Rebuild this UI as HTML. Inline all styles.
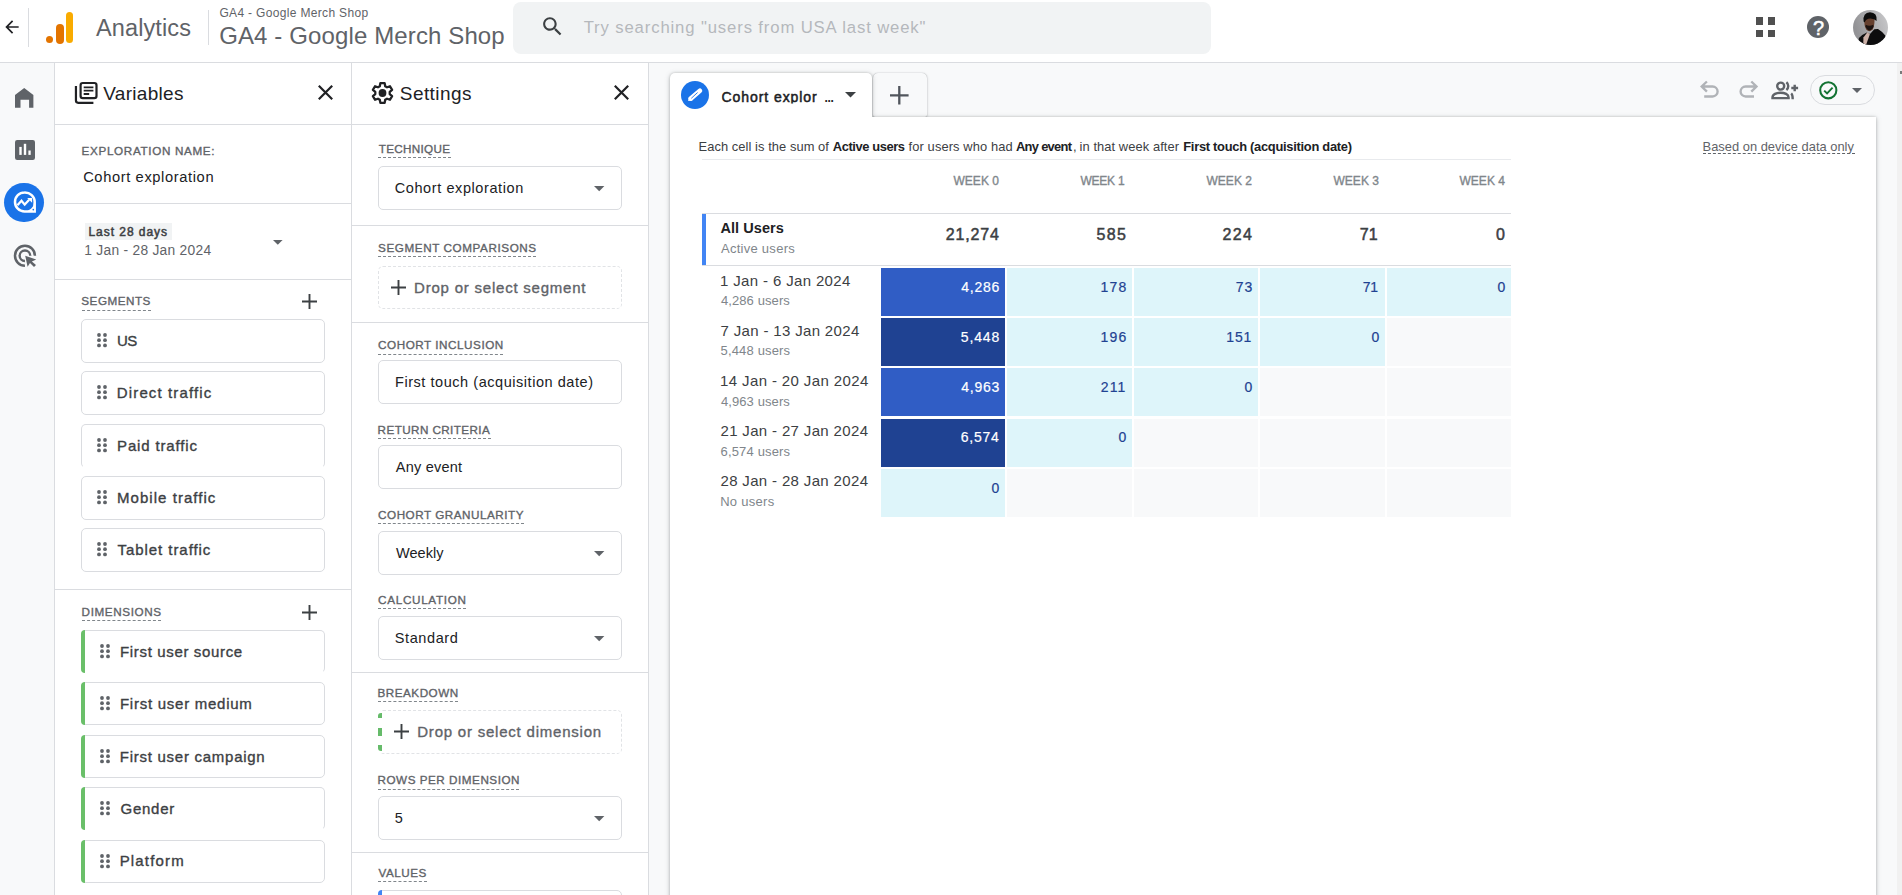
<!DOCTYPE html>
<html lang="en"><head><meta charset="utf-8"><title>Analytics | Cohort exploration</title>
<style>
html,body{margin:0;padding:0;}
body{width:1902px;height:895px;overflow:hidden;background:#fff;font-family:"Liberation Sans", sans-serif;position:relative;}
.a{position:absolute;box-sizing:border-box;}
.t{position:absolute;white-space:nowrap;line-height:20px;}
.t b{font-weight:bold;}
svg{position:absolute;overflow:visible;}
</style></head>
<body>
<div class="a" style="left:0px;top:0px;width:1902px;height:62px;background:#fff;"></div>
<div class="a" style="left:0px;top:62px;width:1902px;height:1px;background:#dadce0;"></div>
<div class="a" style="left:0px;top:63px;width:54px;height:832px;background:#f8f9fa;"></div>
<div class="a" style="left:54px;top:63px;width:1px;height:832px;background:#dadce0;"></div>
<div class="a" style="left:351px;top:63px;width:1px;height:832px;background:#dadce0;"></div>
<div class="a" style="left:648px;top:63px;width:1px;height:832px;background:#dadce0;"></div>
<div class="a" style="left:649px;top:63px;width:1248px;height:832px;background:#f8f9fa;"></div>
<div class="a" style="left:1897px;top:63px;width:5px;height:832px;background:#f1f1f1;"></div>
<div class="a" style="left:1900.4px;top:71px;width:1.6px;height:3px;background:#7a7a7a;"></div>
<svg style="left:1.5px;top:17.2px" width="20" height="20" viewBox="0 0 24 24"><path fill="#202124" d="M20 11H7.83l5.59-5.59L12 4l-8 8 8 8 1.41-1.41L7.83 13H20v-2z"/></svg>
<div class="a" style="left:28px;top:8px;width:1px;height:39px;background:#dadce0;"></div>
<div class="a" style="left:65.6px;top:11.6px;width:7.8px;height:31.9px;background:#f9ab00;border-radius:4px;"></div>
<div class="a" style="left:55.8px;top:24px;width:7.8px;height:19.5px;background:#e37400;border-radius:4px;"></div>
<div class="a" style="left:45.8px;top:35.8px;width:7.7px;height:7.7px;background:#e37400;border-radius:4px;"></div>
<div class="a" style="left:208px;top:10px;width:1px;height:35px;background:#dadce0;"></div>
<div class="a" style="left:513px;top:2px;width:698px;height:52px;background:#f1f3f4;border-radius:8px;"></div>
<svg style="left:540px;top:13.7px" width="25" height="25" viewBox="0 0 24 24"><path fill="#3c4043" d="M15.5 14h-.79l-.28-.27C15.41 12.59 16 11.11 16 9.5 16 5.91 13.09 3 9.5 3S3 5.91 3 9.5 5.91 16 9.5 16c1.61 0 3.09-.59 4.23-1.57l.27.28v.79l5 4.99L20.49 19l-4.99-5zm-6 0C7.01 14 5 11.99 5 9.5S7.01 5 9.5 5 14 7.01 14 9.5 11.99 14 9.5 14z"/></svg>
<div class="a" style="left:1756px;top:17.4px;width:7px;height:7.2px;background:#505050;"></div>
<div class="a" style="left:1768.2px;top:17.4px;width:7px;height:7.2px;background:#505050;"></div>
<div class="a" style="left:1756px;top:29.5px;width:7px;height:7.2px;background:#505050;"></div>
<div class="a" style="left:1768.2px;top:29.5px;width:7px;height:7.2px;background:#505050;"></div>
<div class="a" style="left:1807.3px;top:15.8px;width:22px;height:22px;background:#5f6368;border-radius:11px;"></div>
<svg style="left:1853px;top:10px" width="35" height="35" viewBox="0 0 35 35"><defs><clipPath id="av"><circle cx="17.5" cy="17.5" r="17.5"/></clipPath><linearGradient id="avg" x1="0" x2="1" y1="0.3" y2="0"><stop offset="0" stop-color="#939396"/><stop offset="1" stop-color="#cbcbcd"/></linearGradient></defs><g clip-path="url(#av)"><rect width="35" height="35" fill="url(#avg)"/><path d="M5 35 L5.9 28 Q9 24.5 13.9 22.5 L17 24 L21.3 19.3 L25 18.9 Q29.5 21.5 32.3 25.6 L33.5 35 Z" fill="#0d0d0e"/><path d="M10.4 27.5 L14.4 22.3 L16.9 24.2 L13.2 34.5 L10.3 33.5 Z" fill="#cdb1a8"/><path d="M11.4 7 Q10.8 16 13.2 19.6 Q16.3 22.8 19.6 19.6 Q22 15.5 21.4 7 Z" fill="#66402f"/><path d="M12.4 16.5 Q16.3 24.5 20.6 16.8 L20.2 14.8 Q16.3 16.8 12.8 14.8 Z" fill="#1c1311"/><path d="M10.6 11.5 Q9.6 2.6 17 2.3 Q24.6 2.6 23.6 11 Q21.5 8.5 17.3 8.5 Q13 8.5 11.6 12.5 Z" fill="#0c0c0c"/></g></svg>
<svg style="left:14.8px;top:88.2px" width="18.4" height="19.7" viewBox="0 0 18.4 19.7"><path fill="#5f6368" d="M9.2 0 L18.4 7 V19.7 H14.1 V11.7 H5.5 V19.7 H0 V7 Z"/></svg>
<svg style="left:14.8px;top:140px" width="20" height="20" viewBox="0 0 20 20"><rect width="20" height="20" rx="2.2" fill="#5f6368"/><rect x="4.3" y="6.9" width="2.4" height="8" fill="#fff"/><rect x="8.8" y="3.8" width="2.4" height="11.1" fill="#fff"/><rect x="13.4" y="10.5" width="2.3" height="4.4" fill="#fff"/></svg>
<div class="a" style="left:4.2px;top:182.6px;width:39.6px;height:39.6px;background:#1a73e8;border-radius:20px;"></div>
<svg style="left:12px;top:189.6px" width="24" height="24" viewBox="0 0 24 24" fill="none" stroke="#fff"><path d="M12.5 21.4 A9.5 9.5 0 0 0 22 11.9 L22.7 11.9 L22.7 21.4 Z" fill="#fff" stroke="none"/><path d="M12.5 2.4 A9.5 9.5 0 1 0 12.5 21.4 H22.7 V11.9 A9.9 9.5 0 0 0 12.5 2.4 Z" stroke-width="2.5"/><path d="M5.4 15.2 L9.5 10.7 L12.7 14.6 L17.2 9.8" stroke-width="2.2"/><path d="M15.2 7.9 H20.1 V12.8 Z" fill="#fff" stroke="none"/><circle cx="21.3" cy="19.6" r="0.85" fill="#1a73e8" stroke="none"/></svg>
<svg style="left:13px;top:243.5px" width="24" height="24" viewBox="0 0 24 24" fill="none" stroke="#5f6368"><path d="M11.95 21.7 A9.95 9.95 0 1 1 21.9 11.75" stroke-width="2.5"/><path d="M11.95 17.05 A5.3 5.3 0 1 1 17.25 11.75" stroke-width="2.4"/><path d="M12.2 11.7 L23.2 15.4 L18.9 17.4 L23 21.1 L21 23 L17 19 L14.6 22.7 Z" fill="#5f6368" stroke="none"/></svg>
<svg style="left:74.5px;top:82px" width="23" height="22" viewBox="0 0 23 22" fill="none" stroke="#202124"><rect x="5.6" y="1" width="15.9" height="15.1" rx="2.2" stroke-width="2.2"/><path d="M0.95 4.1 V18.6 A2.2 2.2 0 0 0 3.15 20.8 H18.4" stroke-width="2.2"/><path d="M8.7 5.3 H18.4 M8.7 8.7 H18.4 M8.7 12 H14.2" stroke-width="1.8"/></svg>
<svg style="left:317.5px;top:85.4px" width="15" height="15" viewBox="0 0 15 15"><path d="M0.8 0.8 L14.2 14.2 M14.2 0.8 L0.8 14.2" stroke="#202124" stroke-width="2.2" fill="none"/></svg>
<div class="a" style="left:55px;top:124px;width:296px;height:1px;background:#dadce0;"></div>
<div class="a" style="left:55px;top:203px;width:296px;height:1px;background:#dadce0;"></div>
<div class="a" style="left:85px;top:223px;width:87px;height:16.6px;background:#f1f3f4;"></div>
<svg style="left:273px;top:240.2px" width="9.6" height="4.8" viewBox="0 0 10 5"><path d="M0 0 H10 L5 5 Z" fill="#5f6368"/></svg>
<div class="a" style="left:55px;top:279px;width:296px;height:1px;background:#dadce0;"></div>
<div class="a" style="left:81.6px;top:309.5px;width:69.1px;height:0;border-top:1px dashed #80868b"></div>
<svg style="left:302.2px;top:294px" width="15" height="15" viewBox="0 0 15 15"><path d="M7.5 0 V15 M0 7.5 H15" stroke="#3c4043" stroke-width="1.9" fill="none"/></svg>
<div class="a" style="left:81px;top:319px;width:244.3px;height:44px;background:#fff;border:1px solid #dadce0;border-radius:5px;"></div>
<svg style="left:97px;top:333.3px" width="10" height="14.4" viewBox="0 0 10 14.4"><circle cx="2" cy="2" r="1.9" fill="#5f6368"/><circle cx="2" cy="7.2" r="1.9" fill="#5f6368"/><circle cx="2" cy="12.4" r="1.9" fill="#5f6368"/><circle cx="8" cy="2" r="1.9" fill="#5f6368"/><circle cx="8" cy="7.2" r="1.9" fill="#5f6368"/><circle cx="8" cy="12.4" r="1.9" fill="#5f6368"/></svg>
<div class="a" style="left:81px;top:371px;width:244.3px;height:44px;background:#fff;border:1px solid #dadce0;border-radius:5px;"></div>
<svg style="left:97px;top:385.3px" width="10" height="14.4" viewBox="0 0 10 14.4"><circle cx="2" cy="2" r="1.9" fill="#5f6368"/><circle cx="2" cy="7.2" r="1.9" fill="#5f6368"/><circle cx="2" cy="12.4" r="1.9" fill="#5f6368"/><circle cx="8" cy="2" r="1.9" fill="#5f6368"/><circle cx="8" cy="7.2" r="1.9" fill="#5f6368"/><circle cx="8" cy="12.4" r="1.9" fill="#5f6368"/></svg>
<div class="a" style="left:81px;top:424px;width:244.3px;height:43.5px;background:#fff;border:1px solid #dadce0;border-radius:5px;border-bottom-color:transparent;"></div>
<svg style="left:97px;top:438.3px" width="10" height="14.4" viewBox="0 0 10 14.4"><circle cx="2" cy="2" r="1.9" fill="#5f6368"/><circle cx="2" cy="7.2" r="1.9" fill="#5f6368"/><circle cx="2" cy="12.4" r="1.9" fill="#5f6368"/><circle cx="8" cy="2" r="1.9" fill="#5f6368"/><circle cx="8" cy="7.2" r="1.9" fill="#5f6368"/><circle cx="8" cy="12.4" r="1.9" fill="#5f6368"/></svg>
<div class="a" style="left:81px;top:476px;width:244.3px;height:43.5px;background:#fff;border:1px solid #dadce0;border-radius:5px;"></div>
<svg style="left:97px;top:490.3px" width="10" height="14.4" viewBox="0 0 10 14.4"><circle cx="2" cy="2" r="1.9" fill="#5f6368"/><circle cx="2" cy="7.2" r="1.9" fill="#5f6368"/><circle cx="2" cy="12.4" r="1.9" fill="#5f6368"/><circle cx="8" cy="2" r="1.9" fill="#5f6368"/><circle cx="8" cy="7.2" r="1.9" fill="#5f6368"/><circle cx="8" cy="12.4" r="1.9" fill="#5f6368"/></svg>
<div class="a" style="left:81px;top:528px;width:244.3px;height:43.5px;background:#fff;border:1px solid #dadce0;border-radius:5px;"></div>
<svg style="left:97px;top:542.3px" width="10" height="14.4" viewBox="0 0 10 14.4"><circle cx="2" cy="2" r="1.9" fill="#5f6368"/><circle cx="2" cy="7.2" r="1.9" fill="#5f6368"/><circle cx="2" cy="12.4" r="1.9" fill="#5f6368"/><circle cx="8" cy="2" r="1.9" fill="#5f6368"/><circle cx="8" cy="7.2" r="1.9" fill="#5f6368"/><circle cx="8" cy="12.4" r="1.9" fill="#5f6368"/></svg>
<div class="a" style="left:55px;top:589px;width:296px;height:1px;background:#dadce0;"></div>
<div class="a" style="left:81.6px;top:619.5px;width:79.9px;height:0;border-top:1px dashed #80868b"></div>
<svg style="left:302.2px;top:605px" width="15" height="15" viewBox="0 0 15 15"><path d="M7.5 0 V15 M0 7.5 H15" stroke="#3c4043" stroke-width="1.9" fill="none"/></svg>
<div class="a" style="left:81px;top:630px;width:244.3px;height:43px;background:#fff;border:1px solid #dadce0;border-radius:5px;border-bottom-color:transparent;"></div>
<div class="a" style="left:81px;top:630px;width:4px;height:43px;background:#6abf69;border-radius:5px 0 0 5px;"></div>
<svg style="left:100.2px;top:644px" width="10" height="14.4" viewBox="0 0 10 14.4"><circle cx="2" cy="2" r="1.9" fill="#5f6368"/><circle cx="2" cy="7.2" r="1.9" fill="#5f6368"/><circle cx="2" cy="12.4" r="1.9" fill="#5f6368"/><circle cx="8" cy="2" r="1.9" fill="#5f6368"/><circle cx="8" cy="7.2" r="1.9" fill="#5f6368"/><circle cx="8" cy="12.4" r="1.9" fill="#5f6368"/></svg>
<div class="a" style="left:81px;top:682px;width:244.3px;height:43px;background:#fff;border:1px solid #dadce0;border-radius:5px;"></div>
<div class="a" style="left:81px;top:682px;width:4px;height:43px;background:#6abf69;border-radius:5px 0 0 5px;"></div>
<svg style="left:100.2px;top:696px" width="10" height="14.4" viewBox="0 0 10 14.4"><circle cx="2" cy="2" r="1.9" fill="#5f6368"/><circle cx="2" cy="7.2" r="1.9" fill="#5f6368"/><circle cx="2" cy="12.4" r="1.9" fill="#5f6368"/><circle cx="8" cy="2" r="1.9" fill="#5f6368"/><circle cx="8" cy="7.2" r="1.9" fill="#5f6368"/><circle cx="8" cy="12.4" r="1.9" fill="#5f6368"/></svg>
<div class="a" style="left:81px;top:734.5px;width:244.3px;height:43px;background:#fff;border:1px solid #dadce0;border-radius:5px;"></div>
<div class="a" style="left:81px;top:734.5px;width:4px;height:43px;background:#6abf69;border-radius:5px 0 0 5px;"></div>
<svg style="left:100.2px;top:748.5px" width="10" height="14.4" viewBox="0 0 10 14.4"><circle cx="2" cy="2" r="1.9" fill="#5f6368"/><circle cx="2" cy="7.2" r="1.9" fill="#5f6368"/><circle cx="2" cy="12.4" r="1.9" fill="#5f6368"/><circle cx="8" cy="2" r="1.9" fill="#5f6368"/><circle cx="8" cy="7.2" r="1.9" fill="#5f6368"/><circle cx="8" cy="12.4" r="1.9" fill="#5f6368"/></svg>
<div class="a" style="left:81px;top:787px;width:244.3px;height:43px;background:#fff;border:1px solid #dadce0;border-radius:5px;border-bottom-color:transparent;"></div>
<div class="a" style="left:81px;top:787px;width:4px;height:43px;background:#6abf69;border-radius:5px 0 0 5px;"></div>
<svg style="left:100.2px;top:801px" width="10" height="14.4" viewBox="0 0 10 14.4"><circle cx="2" cy="2" r="1.9" fill="#5f6368"/><circle cx="2" cy="7.2" r="1.9" fill="#5f6368"/><circle cx="2" cy="12.4" r="1.9" fill="#5f6368"/><circle cx="8" cy="2" r="1.9" fill="#5f6368"/><circle cx="8" cy="7.2" r="1.9" fill="#5f6368"/><circle cx="8" cy="12.4" r="1.9" fill="#5f6368"/></svg>
<div class="a" style="left:81px;top:839.5px;width:244.3px;height:43px;background:#fff;border:1px solid #dadce0;border-radius:5px;"></div>
<div class="a" style="left:81px;top:839.5px;width:4px;height:43px;background:#6abf69;border-radius:5px 0 0 5px;"></div>
<svg style="left:100.2px;top:853.5px" width="10" height="14.4" viewBox="0 0 10 14.4"><circle cx="2" cy="2" r="1.9" fill="#5f6368"/><circle cx="2" cy="7.2" r="1.9" fill="#5f6368"/><circle cx="2" cy="12.4" r="1.9" fill="#5f6368"/><circle cx="8" cy="2" r="1.9" fill="#5f6368"/><circle cx="8" cy="7.2" r="1.9" fill="#5f6368"/><circle cx="8" cy="12.4" r="1.9" fill="#5f6368"/></svg>
<svg style="left:371px;top:82px" width="23" height="22" viewBox="0 0 23 22"><path d="M8.80 4.22 L9.35 1.15 L13.65 1.15 L14.20 4.22 L16.02 5.27 L18.96 4.21 L21.11 7.94 L18.72 9.95 L18.72 12.05 L21.11 14.06 L18.96 17.79 L16.02 16.73 L14.20 17.78 L13.65 20.85 L9.35 20.85 L8.80 17.78 L6.98 16.73 L4.04 17.79 L1.89 14.06 L4.28 12.05 L4.28 9.95 L1.89 7.94 L4.04 4.21 L6.98 5.27 Z" fill="none" stroke="#202124" stroke-width="2.3" stroke-linejoin="round"/><circle cx="11.5" cy="11" r="3.9" fill="#202124"/></svg>
<svg style="left:614.3px;top:85.4px" width="15" height="15" viewBox="0 0 15 15"><path d="M0.8 0.8 L14.2 14.2 M14.2 0.8 L0.8 14.2" stroke="#202124" stroke-width="2.2" fill="none"/></svg>
<div class="a" style="left:352px;top:124px;width:296px;height:1px;background:#dadce0;"></div>
<div class="a" style="left:378.1px;top:156.5px;width:72.9px;height:0;border-top:1px dashed #80868b"></div>
<div class="a" style="left:378px;top:166px;width:244px;height:43.5px;background:#fff;border:1px solid #dadce0;border-radius:5px;"></div>
<svg style="left:593.9px;top:185.7px" width="10.4" height="5.2" viewBox="0 0 10 5"><path d="M0 0 H10 L5 5 Z" fill="#5f6368"/></svg>
<div class="a" style="left:352px;top:225px;width:296px;height:1px;background:#dadce0;"></div>
<div class="a" style="left:378.1px;top:255.5px;width:158.1px;height:0;border-top:1px dashed #80868b"></div>
<div class="a" style="left:378px;top:266px;width:244px;height:42.5px;border:1px dashed #e1e3e6;border-radius:5px;"></div>
<svg style="left:391.3px;top:280px" width="15" height="15" viewBox="0 0 15 15"><path d="M7.5 0 V15 M0 7.5 H15" stroke="#3c4043" stroke-width="1.9" fill="none"/></svg>
<div class="a" style="left:352px;top:322px;width:296px;height:1px;background:#dadce0;"></div>
<div class="a" style="left:378.1px;top:353.5px;width:125.2px;height:0;border-top:1px dashed #80868b"></div>
<div class="a" style="left:378px;top:360px;width:244px;height:43.5px;background:#fff;border:1px solid #dadce0;border-radius:5px;"></div>
<div class="a" style="left:378.1px;top:437.5px;width:112.5px;height:0;border-top:1px dashed #80868b"></div>
<div class="a" style="left:378px;top:445px;width:244px;height:43.5px;background:#fff;border:1px solid #dadce0;border-radius:5px;"></div>
<div class="a" style="left:378.1px;top:522.5px;width:146.0px;height:0;border-top:1px dashed #80868b"></div>
<div class="a" style="left:378px;top:531px;width:244px;height:43.5px;background:#fff;border:1px solid #dadce0;border-radius:5px;"></div>
<svg style="left:593.9px;top:550.7px" width="10.4" height="5.2" viewBox="0 0 10 5"><path d="M0 0 H10 L5 5 Z" fill="#5f6368"/></svg>
<div class="a" style="left:378.1px;top:607.5px;width:88.0px;height:0;border-top:1px dashed #80868b"></div>
<div class="a" style="left:378px;top:616px;width:244px;height:43.5px;background:#fff;border:1px solid #dadce0;border-radius:5px;"></div>
<svg style="left:593.9px;top:635.7px" width="10.4" height="5.2" viewBox="0 0 10 5"><path d="M0 0 H10 L5 5 Z" fill="#5f6368"/></svg>
<div class="a" style="left:352px;top:672px;width:296px;height:1px;background:#dadce0;"></div>
<div class="a" style="left:378.1px;top:700.5px;width:80.0px;height:0;border-top:1px dashed #80868b"></div>
<div class="a" style="left:378px;top:710px;width:244px;height:43.7px;border:1px dashed #e1e3e6;border-radius:5px;"></div>
<div class="a" style="left:377px;top:711px;width:4px;height:42px;background:#fff;"></div>
<div class="a" style="left:378px;top:712.6px;width:4px;height:5.199999999999932px;background:#66bb6a;border-radius:3px 0 0 0;"></div>
<div class="a" style="left:378px;top:727.7px;width:4px;height:7.899999999999977px;background:#66bb6a;"></div>
<div class="a" style="left:378px;top:745.3px;width:4px;height:6.100000000000023px;background:#66bb6a;border-radius:0 0 0 3px;"></div>
<svg style="left:394.3px;top:724.2px" width="15" height="15" viewBox="0 0 15 15"><path d="M7.5 0 V15 M0 7.5 H15" stroke="#3c4043" stroke-width="1.9" fill="none"/></svg>
<div class="a" style="left:378.1px;top:788.5px;width:141.3px;height:0;border-top:1px dashed #80868b"></div>
<div class="a" style="left:378px;top:796px;width:244px;height:43.5px;background:#fff;border:1px solid #dadce0;border-radius:5px;"></div>
<svg style="left:593.9px;top:815.7px" width="10.4" height="5.2" viewBox="0 0 10 5"><path d="M0 0 H10 L5 5 Z" fill="#5f6368"/></svg>
<div class="a" style="left:352px;top:852px;width:296px;height:1px;background:#dadce0;"></div>
<div class="a" style="left:378.1px;top:880.5px;width:48.5px;height:0;border-top:1px dashed #80868b"></div>
<div class="a" style="left:378px;top:890px;width:244px;height:43.5px;background:#fff;border:1px solid #dadce0;border-radius:5px;overflow:hidden;"></div>
<div class="a" style="left:378px;top:890px;width:4px;height:20px;background:#4285f4;border-radius:5px 0 0 0;"></div>
<div class="a" style="left:872.5px;top:72.7px;width:54.8px;height:44px;background:#f8f9fa;border-radius:5px 5px 2px 2px;box-shadow:0 0 1px rgba(60,64,67,.45),0 1px 3px rgba(60,64,67,.25);"></div>
<svg style="left:890.3px;top:85.8px" width="18.6" height="18.6" viewBox="0 0 15 15"><path d="M7.5 0 V15 M0 7.5 H15" stroke="#50555c" stroke-width="1.85" fill="none"/></svg>
<div class="a" style="left:0;top:0;width:1897px;height:895px;overflow:hidden;pointer-events:none"><div class="a" style="left:0;top:0;width:1897px;height:940px;filter:drop-shadow(0 0 1px rgba(60,64,67,.2)) drop-shadow(0 1px 2.5px rgba(60,64,67,.32))"><div class="a" style="left:670px;top:72.7px;width:202.3px;height:50px;background:#fff;border-radius:5px 5px 0 0"></div><div class="a" style="left:670px;top:117px;width:1205.5px;height:800px;background:#fff"></div></div></div>
<div class="a" style="left:681px;top:81px;width:28px;height:28px;background:#1a73e8;border-radius:14px;"></div>
<svg style="left:681px;top:81px" width="28" height="28" viewBox="0 0 28 28"><path d="M9.7 17.6 L18.9 9.8" stroke="#fff" stroke-width="4.7" stroke-linecap="round"/><path d="M7.1 20.0 L7.9 15.9 L11.6 19.3 Z" fill="#fff"/><path d="M10.3 17.3 L16.6 11.5" stroke="#1a73e8" stroke-width="0.9"/></svg>
<div class="a" style="left:715px;top:84px;width:110px;height:19.4px;overflow:hidden"></div>
<svg style="left:845px;top:92px" width="11" height="5.5" viewBox="0 0 10 5"><path d="M0 0 H10 L5 5 Z" fill="#3c4043"/></svg>
<svg style="left:1690px;top:70px" width="80" height="40" viewBox="1690 70 80 40" fill="none" stroke="#b0b3b7" stroke-width="2.35"><path d="M1706.9 81.5 L1701.7 86.5 L1706.9 91.6 M1702 86.5 H1712.6 A5 5 0 0 1 1712.6 96.5 H1704.2"/><path d="M1751.3 81.5 L1756.5 86.5 L1751.3 91.6 M1756.2 86.5 H1745.6 A5 5 0 0 0 1745.6 96.5 H1754"/></svg>
<svg style="left:1771px;top:80.5px" width="28" height="19" viewBox="0 0 28 19" fill="none" stroke="#5f6368" stroke-width="2.4"><circle cx="9.7" cy="5.1" r="3.5"/><path d="M15.4 1.2 A5 5 0 0 1 15.4 9.0"/><path d="M23.7 3.7 V10.3 M20.3 7 H27.1"/><path d="M1.5 17.1 V16.4 C1.5 13.4 5.5 11.7 9.55 11.7 C13.6 11.7 17.6 13.4 17.6 16.4 V17.1 Z"/><path d="M20.2 12.4 C21.7 13.6 21.7 15.4 21.7 18.2"/></svg>
<div class="a" style="left:1810px;top:75px;width:64.5px;height:29.5px;border:1px solid #dadce0;border-radius:15px;"></div>
<svg style="left:1819px;top:80.6px" width="18.6" height="18.6" viewBox="0 0 20 20" fill="none" stroke="#137333"><circle cx="10" cy="10" r="8.7" stroke-width="2.2"/><path d="M5.6 10.3 L8.7 13.4 L14.6 7.2" stroke-width="2"/></svg>
<svg style="left:1852px;top:87.9px" width="10" height="5" viewBox="0 0 10 5"><path d="M0 0 H10 L5 5 Z" fill="#5f6368"/></svg>
<div class="a" style="left:1703px;top:153px;width:151.5px;height:0;border-top:1px dashed #5f6368"></div>
<div class="a" style="left:702px;top:159px;width:809px;height:1px;background:#e8eaed;"></div>
<div class="a" style="left:702px;top:213px;width:809px;height:1px;background:#dadce0;"></div>
<div class="a" style="left:702px;top:213.5px;width:4px;height:51.5px;background:#4285f4;"></div>
<div class="a" style="left:702px;top:265px;width:809px;height:1px;background:#dadce0;"></div>
<div class="a" style="left:881px;top:268px;width:124px;height:47.6px;background:#305dc5;"></div>
<div class="a" style="left:1007px;top:268px;width:125px;height:47.6px;background:#def5fa;"></div>
<div class="a" style="left:1134px;top:268px;width:124px;height:47.6px;background:#def5fa;"></div>
<div class="a" style="left:1260px;top:268px;width:125px;height:47.6px;background:#def5fa;"></div>
<div class="a" style="left:1387px;top:268px;width:124px;height:47.6px;background:#def5fa;"></div>
<div class="a" style="left:881px;top:318px;width:124px;height:47.6px;background:#1f4292;"></div>
<div class="a" style="left:1007px;top:318px;width:125px;height:47.6px;background:#def5fa;"></div>
<div class="a" style="left:1134px;top:318px;width:124px;height:47.6px;background:#def5fa;"></div>
<div class="a" style="left:1260px;top:318px;width:125px;height:47.6px;background:#def5fa;"></div>
<div class="a" style="left:1387px;top:318px;width:124px;height:47.6px;background:#f8f9fa;"></div>
<div class="a" style="left:881px;top:368px;width:124px;height:48px;background:#305dc5;"></div>
<div class="a" style="left:1007px;top:368px;width:125px;height:48px;background:#def5fa;"></div>
<div class="a" style="left:1134px;top:368px;width:124px;height:48px;background:#def5fa;"></div>
<div class="a" style="left:1260px;top:368px;width:125px;height:48px;background:#f8f9fa;"></div>
<div class="a" style="left:1387px;top:368px;width:124px;height:48px;background:#f8f9fa;"></div>
<div class="a" style="left:881px;top:419px;width:124px;height:48px;background:#1f4292;"></div>
<div class="a" style="left:1007px;top:419px;width:125px;height:48px;background:#def5fa;"></div>
<div class="a" style="left:1134px;top:419px;width:124px;height:48px;background:#f8f9fa;"></div>
<div class="a" style="left:1260px;top:419px;width:125px;height:48px;background:#f8f9fa;"></div>
<div class="a" style="left:1387px;top:419px;width:124px;height:48px;background:#f8f9fa;"></div>
<div class="a" style="left:881px;top:469px;width:124px;height:48px;background:#def5fa;"></div>
<div class="a" style="left:1007px;top:469px;width:125px;height:48px;background:#f8f9fa;"></div>
<div class="a" style="left:1134px;top:469px;width:124px;height:48px;background:#f8f9fa;"></div>
<div class="a" style="left:1260px;top:469px;width:125px;height:48px;background:#f8f9fa;"></div>
<div class="a" style="left:1387px;top:469px;width:124px;height:48px;background:#f8f9fa;"></div>
<span class="t" style="left:96.07px;top:18px;font-size:23.5px;color:#5f6368;letter-spacing:0.1px;">Analytics</span>
<span class="t" style="left:219.45px;top:3px;font-size:12px;color:#5f6368;letter-spacing:0.332px;">GA4 - Google Merch Shop</span>
<span class="t" style="left:219.2px;top:26px;font-size:24px;color:#5f6368;letter-spacing:0.122px;">GA4 - Google Merch Shop</span>
<span class="t" style="left:583.66px;top:18px;font-size:16.7px;color:#b5b8bc;letter-spacing:0.868px;">Try searching "users from USA last week"</span>
<span class="t" style="left:1813.0px;top:18px;font-size:20px;color:#fff;letter-spacing:0.0px;-webkit-text-stroke:0.5px #fff;">?</span>
<span class="t" style="left:103.3px;top:84px;font-size:19px;color:#202124;letter-spacing:0.292px;">Variables</span>
<span class="t" style="left:81.61px;top:141px;font-size:11.7px;color:#5f6368;letter-spacing:0.652px;-webkit-text-stroke:0.35px #5f6368;">EXPLORATION NAME:</span>
<span class="t" style="left:83.16px;top:167px;font-size:14.7px;color:#202124;letter-spacing:0.611px;">Cohort exploration</span>
<span class="t" style="left:88.4px;top:222px;font-size:12px;color:#3c4043;letter-spacing:0.968px;-webkit-text-stroke:0.5px #3c4043;">Last 28 days</span>
<span class="t" style="left:84.31px;top:241px;font-size:13.8px;color:#5f6368;letter-spacing:0.267px;">1 Jan - 28 Jan 2024</span>
<span class="t" style="left:81.32px;top:291px;font-size:11.7px;color:#5f6368;letter-spacing:0.497px;-webkit-text-stroke:0.35px #5f6368;">SEGMENTS</span>
<span class="t" style="left:117.05px;top:331px;font-size:15px;color:#3c4043;letter-spacing:-0.544px;-webkit-text-stroke:0.35px #3c4043;">US</span>
<span class="t" style="left:116.85px;top:383px;font-size:15px;color:#3c4043;letter-spacing:1.127px;-webkit-text-stroke:0.35px #3c4043;">Direct traffic</span>
<span class="t" style="left:117.05px;top:436px;font-size:15px;color:#3c4043;letter-spacing:0.846px;-webkit-text-stroke:0.35px #3c4043;">Paid traffic</span>
<span class="t" style="left:117.05px;top:488px;font-size:15px;color:#3c4043;letter-spacing:1.041px;-webkit-text-stroke:0.35px #3c4043;">Mobile traffic</span>
<span class="t" style="left:117.55px;top:540px;font-size:15px;color:#3c4043;letter-spacing:0.938px;-webkit-text-stroke:0.35px #3c4043;">Tablet traffic</span>
<span class="t" style="left:81.61px;top:602px;font-size:11.7px;color:#5f6368;letter-spacing:0.604px;-webkit-text-stroke:0.35px #5f6368;">DIMENSIONS</span>
<span class="t" style="left:120.05px;top:642px;font-size:15px;color:#3c4043;letter-spacing:0.65px;-webkit-text-stroke:0.35px #3c4043;">First user source</span>
<span class="t" style="left:119.95px;top:694px;font-size:15px;color:#3c4043;letter-spacing:0.742px;-webkit-text-stroke:0.35px #3c4043;">First user medium</span>
<span class="t" style="left:119.85px;top:747px;font-size:15px;color:#3c4043;letter-spacing:0.73px;-webkit-text-stroke:0.35px #3c4043;">First user campaign</span>
<span class="t" style="left:120.45px;top:799px;font-size:15px;color:#3c4043;letter-spacing:0.771px;-webkit-text-stroke:0.35px #3c4043;">Gender</span>
<span class="t" style="left:119.65px;top:851px;font-size:15px;color:#3c4043;letter-spacing:1.163px;-webkit-text-stroke:0.35px #3c4043;">Platform</span>
<span class="t" style="left:399.8px;top:84px;font-size:19px;color:#202124;letter-spacing:0.428px;">Settings</span>
<span class="t" style="left:378.72px;top:139px;font-size:11.7px;color:#5f6368;letter-spacing:0.316px;-webkit-text-stroke:0.35px #5f6368;">TECHNIQUE</span>
<span class="t" style="left:394.77px;top:178px;font-size:14.5px;color:#202124;letter-spacing:0.585px;">Cohort exploration</span>
<span class="t" style="left:378.07px;top:238px;font-size:11.7px;color:#5f6368;letter-spacing:0.579px;-webkit-text-stroke:0.35px #5f6368;">SEGMENT COMPARISONS</span>
<span class="t" style="left:414.05px;top:278px;font-size:15px;color:#5f6368;letter-spacing:0.782px;-webkit-text-stroke:0.35px #5f6368;">Drop or select segment</span>
<span class="t" style="left:378.07px;top:335px;font-size:11.7px;color:#5f6368;letter-spacing:0.541px;-webkit-text-stroke:0.35px #5f6368;">COHORT INCLUSION</span>
<span class="t" style="left:395.02px;top:372px;font-size:14.5px;color:#202124;letter-spacing:0.545px;">First touch (acquisition date)</span>
<span class="t" style="left:377.62px;top:420px;font-size:11.7px;color:#5f6368;letter-spacing:0.405px;-webkit-text-stroke:0.35px #5f6368;">RETURN CRITERIA</span>
<span class="t" style="left:395.78px;top:457px;font-size:14.5px;color:#202124;letter-spacing:0.231px;">Any event</span>
<span class="t" style="left:378.07px;top:505px;font-size:11.7px;color:#5f6368;letter-spacing:0.519px;-webkit-text-stroke:0.35px #5f6368;">COHORT GRANULARITY</span>
<span class="t" style="left:396.02px;top:543px;font-size:14.5px;color:#202124;letter-spacing:0.034px;">Weekly</span>
<span class="t" style="left:378.07px;top:590px;font-size:11.7px;color:#5f6368;letter-spacing:0.695px;-webkit-text-stroke:0.35px #5f6368;">CALCULATION</span>
<span class="t" style="left:394.77px;top:628px;font-size:14.5px;color:#202124;letter-spacing:0.599px;">Standard</span>
<span class="t" style="left:377.52px;top:683px;font-size:11.7px;color:#5f6368;letter-spacing:0.504px;-webkit-text-stroke:0.35px #5f6368;">BREAKDOWN</span>
<span class="t" style="left:417.25px;top:722px;font-size:15px;color:#5f6368;letter-spacing:0.782px;-webkit-text-stroke:0.35px #5f6368;">Drop or select dimension</span>
<span class="t" style="left:377.52px;top:770px;font-size:11.7px;color:#5f6368;letter-spacing:0.52px;-webkit-text-stroke:0.35px #5f6368;">ROWS PER DIMENSION</span>
<span class="t" style="left:394.77px;top:808px;font-size:14.5px;color:#202124;letter-spacing:0.0px;">5</span>
<span class="t" style="left:378.62px;top:863px;font-size:11.7px;color:#5f6368;letter-spacing:0.481px;-webkit-text-stroke:0.35px #5f6368;">VALUES</span>
<span class="t" style="left:721.45px;top:87px;font-size:14px;color:#202124;letter-spacing:0.938px;-webkit-text-stroke:0.5px #202124;clip-path:inset(0 0 3.4px 0);">Cohort explor</span>
<span class="t" style="left:824.5px;top:88px;font-size:12px;color:#202124;letter-spacing:-0.358px;font-weight:bold;">...</span>
<span class="t" style="left:698.6px;top:137px;font-size:12.9px;color:#3c4043;letter-spacing:0.06px;">Each cell is the sum of</span>
<span class="t" style="left:832.86px;top:137px;font-size:12.9px;color:#202124;letter-spacing:-0.421px;font-weight:bold;">Active users</span>
<span class="t" style="left:908.56px;top:137px;font-size:12.9px;color:#3c4043;letter-spacing:0.108px;">for users who had</span>
<span class="t" style="left:1015.96px;top:137px;font-size:12.9px;color:#202124;letter-spacing:-0.69px;font-weight:bold;">Any event</span>
<span class="t" style="left:1072.95px;top:137px;font-size:12.9px;color:#3c4043;letter-spacing:0.0px;">,</span>
<span class="t" style="left:1079.56px;top:137px;font-size:12.9px;color:#3c4043;letter-spacing:0.078px;">in that week after</span>
<span class="t" style="left:1183.26px;top:137px;font-size:12.9px;color:#202124;letter-spacing:-0.28px;font-weight:bold;">First touch (acquisition date)</span>
<span class="t" style="left:1702.6px;top:137px;font-size:12.9px;color:#5f6368;letter-spacing:0.003px;">Based on device data only</span>
<span class="t" style="left:953.5px;top:171px;font-size:12px;color:#80868b;letter-spacing:0.018px;-webkit-text-stroke:0.35px #80868b;">WEEK 0</span>
<span class="t" style="left:1080.4px;top:171px;font-size:12px;color:#80868b;letter-spacing:-0.232px;-webkit-text-stroke:0.35px #80868b;">WEEK 1</span>
<span class="t" style="left:1206.5px;top:171px;font-size:12px;color:#80868b;letter-spacing:0.018px;-webkit-text-stroke:0.35px #80868b;">WEEK 2</span>
<span class="t" style="left:1333.5px;top:171px;font-size:12px;color:#80868b;letter-spacing:0.018px;-webkit-text-stroke:0.35px #80868b;">WEEK 3</span>
<span class="t" style="left:1459.5px;top:171px;font-size:12px;color:#80868b;letter-spacing:0.018px;-webkit-text-stroke:0.35px #80868b;">WEEK 4</span>
<span class="t" style="left:720.47px;top:218px;font-size:14.5px;color:#202124;letter-spacing:0.059px;font-weight:bold;">All Users</span>
<span class="t" style="left:720.95px;top:239px;font-size:13px;color:#80868b;letter-spacing:0.272px;">Active users</span>
<span class="t" style="left:945.7px;top:225px;font-size:16px;color:#3c4043;letter-spacing:0.832px;-webkit-text-stroke:0.5px #3c4043;">21,274</span>
<span class="t" style="left:1096.5px;top:225px;font-size:16px;color:#3c4043;letter-spacing:1.298px;-webkit-text-stroke:0.5px #3c4043;">585</span>
<span class="t" style="left:1222.5px;top:225px;font-size:16px;color:#3c4043;letter-spacing:1.298px;-webkit-text-stroke:0.5px #3c4043;">224</span>
<span class="t" style="left:1359.8px;top:225px;font-size:16px;color:#3c4043;letter-spacing:0.103px;-webkit-text-stroke:0.5px #3c4043;">71</span>
<span class="t" style="left:1495.89px;top:225px;font-size:16px;color:#3c4043;letter-spacing:0.0px;-webkit-text-stroke:0.5px #3c4043;">0</span>
<span class="t" style="left:720.05px;top:271px;font-size:15px;color:#3c4043;letter-spacing:0.355px;">1 Jan - 6 Jan 2024</span>
<span class="t" style="left:720.95px;top:291px;font-size:13px;color:#80868b;letter-spacing:0.096px;">4,286 users</span>
<span class="t" style="left:961.3px;top:277px;font-size:14px;color:#fff;letter-spacing:0.713px;-webkit-text-stroke:0.2px #fff;">4,286</span>
<span class="t" style="left:1100.6px;top:277px;font-size:14px;color:#1f4292;letter-spacing:1.12px;-webkit-text-stroke:0.2px #1f4292;">178</span>
<span class="t" style="left:1235.65px;top:277px;font-size:14px;color:#1f4292;letter-spacing:0.972px;-webkit-text-stroke:0.2px #1f4292;">73</span>
<span class="t" style="left:1362.7px;top:277px;font-size:14px;color:#1f4292;letter-spacing:-0.178px;-webkit-text-stroke:0.2px #1f4292;">71</span>
<span class="t" style="left:1497.4px;top:277px;font-size:14px;color:#1f4292;letter-spacing:0.0px;-webkit-text-stroke:0.2px #1f4292;">0</span>
<span class="t" style="left:720.45px;top:321px;font-size:15px;color:#3c4043;letter-spacing:0.347px;">7 Jan - 13 Jan 2024</span>
<span class="t" style="left:720.55px;top:341px;font-size:13px;color:#80868b;letter-spacing:0.156px;">5,448 users</span>
<span class="t" style="left:960.8px;top:327px;font-size:14px;color:#fff;letter-spacing:0.838px;-webkit-text-stroke:0.2px #fff;">5,448</span>
<span class="t" style="left:1100.6px;top:327px;font-size:14px;color:#1f4292;letter-spacing:1.12px;-webkit-text-stroke:0.2px #1f4292;">196</span>
<span class="t" style="left:1226.3px;top:327px;font-size:14px;color:#1f4292;letter-spacing:0.87px;-webkit-text-stroke:0.2px #1f4292;">151</span>
<span class="t" style="left:1371.4px;top:327px;font-size:14px;color:#1f4292;letter-spacing:0.0px;-webkit-text-stroke:0.2px #1f4292;">0</span>
<span class="t" style="left:720.05px;top:371px;font-size:15px;color:#3c4043;letter-spacing:0.381px;">14 Jan - 20 Jan 2024</span>
<span class="t" style="left:720.95px;top:392px;font-size:13px;color:#80868b;letter-spacing:0.096px;">4,963 users</span>
<span class="t" style="left:961.3px;top:377px;font-size:14px;color:#fff;letter-spacing:0.713px;-webkit-text-stroke:0.2px #fff;">4,963</span>
<span class="t" style="left:1100.8px;top:377px;font-size:14px;color:#1f4292;letter-spacing:1.061px;-webkit-text-stroke:0.2px #1f4292;">211</span>
<span class="t" style="left:1244.4px;top:377px;font-size:14px;color:#1f4292;letter-spacing:0.0px;-webkit-text-stroke:0.2px #1f4292;">0</span>
<span class="t" style="left:720.45px;top:421px;font-size:15px;color:#3c4043;letter-spacing:0.347px;">21 Jan - 27 Jan 2024</span>
<span class="t" style="left:720.55px;top:442px;font-size:13px;color:#80868b;letter-spacing:0.156px;">6,574 users</span>
<span class="t" style="left:960.8px;top:427px;font-size:14px;color:#fff;letter-spacing:0.713px;-webkit-text-stroke:0.2px #fff;">6,574</span>
<span class="t" style="left:1118.4px;top:427px;font-size:14px;color:#1f4292;letter-spacing:0.0px;-webkit-text-stroke:0.2px #1f4292;">0</span>
<span class="t" style="left:720.45px;top:471px;font-size:15px;color:#3c4043;letter-spacing:0.347px;">28 Jan - 28 Jan 2024</span>
<span class="t" style="left:720.15px;top:492px;font-size:13px;color:#80868b;letter-spacing:0.296px;">No users</span>
<span class="t" style="left:991.4px;top:478px;font-size:14px;color:#1f4292;letter-spacing:0.0px;-webkit-text-stroke:0.2px #1f4292;">0</span>
</body></html>
